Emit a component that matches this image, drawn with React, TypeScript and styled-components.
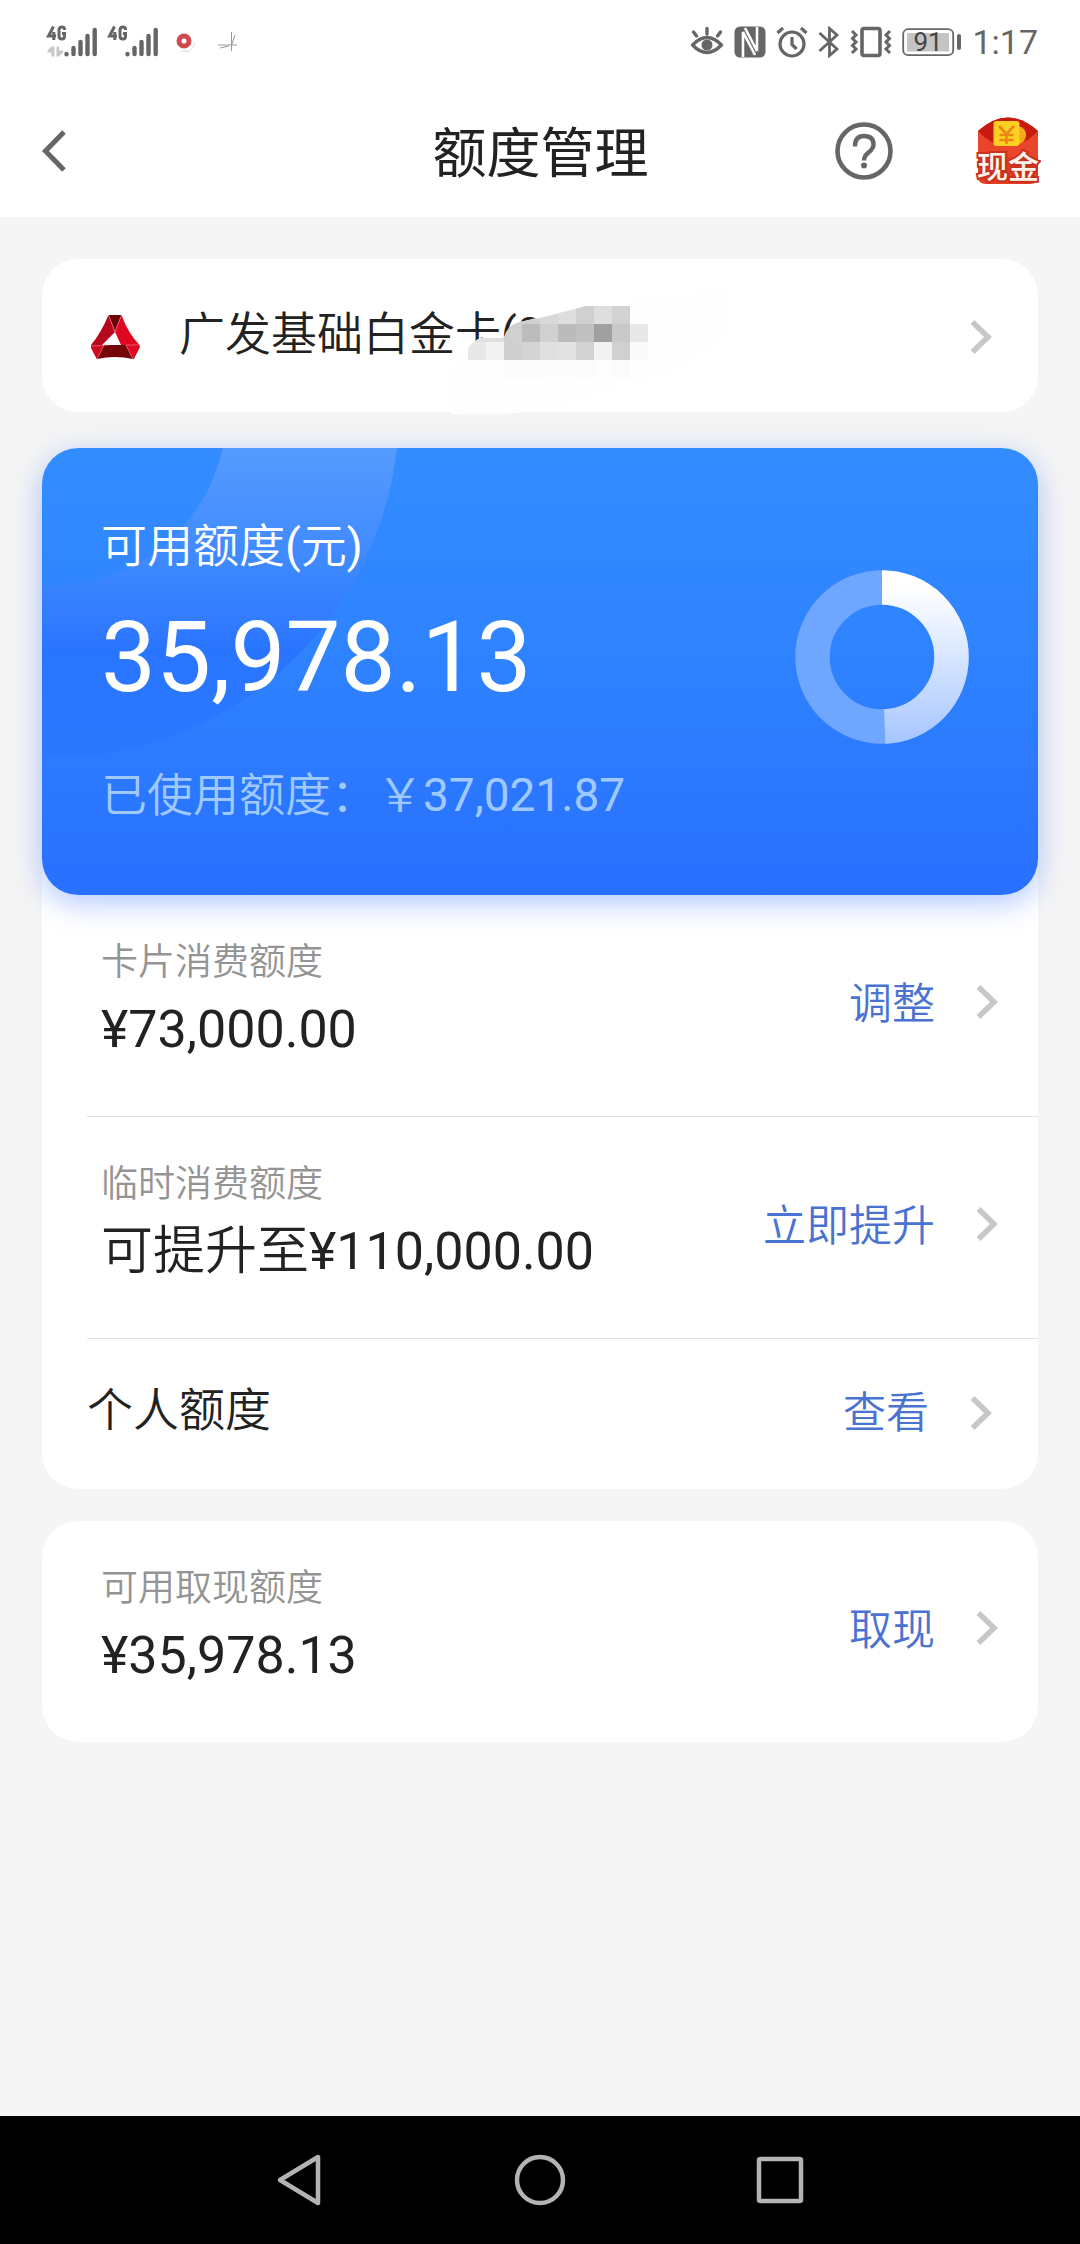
import React from 'react';
import styled, { createGlobalStyle } from 'styled-components';

const GlobalStyle = createGlobalStyle`
  * { box-sizing: border-box; }
  body {
    margin: 0;
    background: #f5f5f5;
    color: #222;
    font-family: Roboto, "Noto Sans CJK SC DemiLight", "Noto Sans CJK SC", sans-serif;
  }
  h1, h2, p, ul { margin: 0; padding: 0; font-weight: 400; }
  ul { list-style: none; }
  button {
    margin: 0;
    padding: 0;
    border: 0;
    background: none;
    color: inherit;
    font: inherit;
    cursor: pointer;
  }
  svg { display: block; flex: none; }
`;

const Page = styled.div`
  min-height: 100vh;
  display: flex;
  flex-direction: column;
`;

const StatusBar = styled.div`
  display: flex;
  justify-content: space-between;
  align-items: center;
  height: 84px;
  padding: 0 42px 0 46px;
  background: #fff;
  color: #666;
`;

const StatusGroup = styled.div<{ $gap: number; $inset?: number }>`
  display: flex;
  align-items: center;
  gap: ${(p) => p.$gap}px;
  padding-left: ${(p) => p.$inset ?? 0}px;
`;

const Clock = styled.span`
  font-size: 34px;
  line-height: 40px;
`;

const Header = styled.header`
  display: grid;
  grid-template-columns: 1fr auto 1fr;
  align-items: center;
  height: 133px;
  padding: 0 39px 0 40px;
  background: #fff;
`;

const Title = styled.h1`
  padding-top: 8px;
  font-family: Roboto, "Noto Sans CJK SC", sans-serif;
  font-size: 54px;
  line-height: 72px;
`;

const HeaderActions = styled.div<{ $end?: boolean }>`
  display: flex;
  justify-content: ${(p) => (p.$end ? 'flex-end' : 'flex-start')};
  align-items: center;
  gap: 82px;
`;

const Content = styled.main`
  flex: 1;
  padding: 42px 42px 64px;
`;

const Card = styled.section<{ $gap?: number }>`
  position: relative;
  margin-bottom: ${(p) => p.$gap ?? 0}px;
  border-radius: 36px;
  background: #fff;
`;

const CardPicker = styled.button`
  display: flex;
  align-items: center;
  width: 100%;
  padding: 45px 46px 43px 48px;
  text-align: left;
`;

const CardName = styled.span`
  flex: 1;
  padding: 0 0 5px 39px;
  font-size: 46px;
  line-height: 60px;
`;

const Redaction = styled.svg`
  position: absolute;
  left: 388px;
  top: 21px;
`;

const Balance = styled.section`
  position: relative;
  display: flex;
  justify-content: space-between;
  align-items: flex-start;
  padding: 68px 69px 70px 59px;
  border-radius: 36px;
  background: linear-gradient(180deg, #338dff 0%, #2f83ff 45%, #2870ff 100%);
  box-shadow: 0 8px 30px rgba(40, 100, 255, 0.36);
  color: #fff;
`;

const BalanceRings = styled.svg`
  position: absolute;
  left: 0;
  top: 0;
  border-top-left-radius: 36px;
`;

const BalanceText = styled.div`
  position: relative;
`;

const BalanceLabel = styled.h2`
  font-size: 46px;
  line-height: 60px;
`;

const BalanceAmount = styled.p`
  padding: 16px 0 41px;
  font-size: 98px;
  line-height: 132px;
`;

const BalanceUsed = styled.p`
  color: #a0c9ff;
  font-size: 46px;
  line-height: 60px;
`;

const BalanceChart = styled.div`
  padding-top: 54px;
`;

const Row = styled.li<{ $compact?: boolean }>`
  display: flex;
  justify-content: space-between;
  align-items: center;
  margin-left: 45px;
  padding: ${(p) => (p.$compact ? '41px 46px 43px 0' : '48px 40px 56px 14px')};

  & + & {
    border-top: 1px solid #e2e2e2;
  }
`;

const RowLabel = styled.h2`
  color: #949494;
  font-size: 37px;
  line-height: 40px;
`;

const RowAmount = styled.p`
  padding-top: 17px;
  font-size: 52px;
  line-height: 60px;
`;

const RowTitle = styled.h2`
  padding-bottom: 6px;
  font-size: 46px;
  line-height: 60px;
`;

const RowAction = styled.button`
  display: flex;
  align-items: center;
  gap: 41px;
  color: #4a73d1;
  font-size: 43px;
  line-height: 60px;
`;

const ActionText = styled.span<{ $lower?: boolean }>`
  padding-top: ${(p) => (p.$lower ? 4 : 0)}px;
`;

const NavBar = styled.nav`
  display: grid;
  grid-template-columns: repeat(3, 1fr);
  align-items: center;
  justify-items: center;
  height: 128px;
  padding: 0 calc(100% / 6);
  background: #000;
`;

const Chevron = () => (
  <svg width="22" height="36" viewBox="0 0 22 36" fill="none" stroke="#c7c7c7" strokeWidth="5.5" aria-hidden="true">
    <path d="M2.5 3 18 18 2.5 33" />
  </svg>
);

const Signal = ({ data }: { data?: boolean }) => (
  <svg width="52" height="34" viewBox="0 0 52 34" aria-hidden="true">
    <g stroke="#666" strokeWidth="3" fill="none">
      <path d="M7.5 1.5 2.5 11H10M7.8 7V15" />
      <path d="M18.5 5V4.5Q18.5 2 16 2 13 2 13 5V11Q13 14 16 14 18.5 14 18.5 11V8.5H16" />
    </g>
    {data && (
      <path
        d="M5.5 21.5H8.5V31.5H5.5V27.5H1.500V25.5ZM10.5 21.5H13V25.500H17V27.5L13 31.5H10.5Z"
        fill="#c8c8c8"
      />
    )}
    <path
      d="M20.500 29V29.200M27.500 23V29M34.500 17V29M41.500 11V29M48.700 5V29"
      stroke="#666"
      strokeWidth="4.400"
      strokeLinecap="round"
    />
  </svg>
);

const RecordDot = () => (
  <svg width="22" height="24" viewBox="0 0 22 24" fill="none" aria-hidden="true">
    <circle cx="9" cy="11" r="5" stroke="#d14a50" strokeWidth="5" />
    <path d="M10 22Q18 21 20 13M6 21Q9 22 12 20" stroke="#ddd" strokeWidth="1" />
  </svg>
);

const Scribble = () => (
  <svg width="22" height="22" viewBox="0 0 22 22" fill="none" stroke="#999" strokeWidth="1" aria-hidden="true">
    <path d="M1 14H20M14.500 1V20M18 4 15 13M3 17 12 15" />
  </svg>
);

const EyeIcon = () => (
  <svg width="34" height="32" viewBox="0 0 34 32" fill="none" stroke="#666" strokeWidth="3.400" strokeLinecap="round" aria-hidden="true">
    <path d="M2.500 19Q17 4 31.500 19 17 34 2.500 19Z" strokeLinejoin="round" />
    <circle cx="17" cy="19" r="5.500" fill="#666" stroke="none" />
    <path d="M17 2.500V8M3.500 6 6.500 10M30.500 6 27.500 10" />
  </svg>
);

const NfcIcon = () => (
  <svg width="32" height="32" viewBox="0 0 32 32" aria-hidden="true">
    <rect x=".5" y=".5" width="31" height="31" rx="5.500" fill="#666" />
    <path d="M9 31V6L21 29M23 1V25L11 2" fill="none" stroke="#fff" strokeWidth="2.600" />
  </svg>
);

const AlarmIcon = () => (
  <svg width="32" height="32" viewBox="0 0 32 32" fill="none" stroke="#666" strokeWidth="3.200" aria-hidden="true">
    <circle cx="16" cy="18" r="12" />
    <path d="M16 11V18.500L20.500 23M1.500 7 7 2M30.500 7 25 2" />
  </svg>
);

const BluetoothIcon = () => (
  <svg width="22" height="32" viewBox="0 0 22 32" fill="none" stroke="#666" strokeWidth="2.800" aria-hidden="true">
    <path d="M1.500 7 19 23 11.500 29.500V2.500L19 9 1.500 25" />
  </svg>
);

const VibrateIcon = () => (
  <svg width="42" height="32" viewBox="0 0 42 32" fill="none" stroke="#666" aria-hidden="true">
    <rect x="12" y="2.500" width="18" height="27" rx="2" strokeWidth="3.600" />
    <path
      d="M2 5 6 9 2.500 12.500 6 16 2.500 19.500 6 23 2 27M40 5 36 9 39.500 12.500 36 16 39.500 19.500 36 23 40 27"
      strokeWidth="3"
    />
  </svg>
);

const BatteryIcon = () => (
  <svg width="60" height="32" viewBox="0 0 60 32" role="img" aria-label="91%">
    <rect x="1.200" y="3.200" width="50" height="26" rx="5" fill="none" stroke="#666" strokeWidth="1.800" />
    <rect x="5" y="7" width="42" height="18.500" fill="#c4c4c4" />
    <rect x="55" y="8" width="4" height="16" rx="2" fill="#666" />
    <text x="26" y="25" textAnchor="middle" fontSize="26" fontFamily="Roboto, sans-serif" fill="#444">
      91
    </text>
  </svg>
);

const BackIcon = () => (
  <svg width="28" height="44" viewBox="0 0 28 44" fill="none" stroke="#666" strokeWidth="5" aria-hidden="true">
    <path d="M24 3 5.500 22 24 41" />
  </svg>
);

const HelpIcon = () => (
  <svg width="58" height="58" viewBox="0 0 58 58" fill="none" stroke="#666" aria-hidden="true">
    <circle cx="29" cy="29" r="26.500" strokeWidth="4.600" />
    <path d="M20 24.500Q20 14 29 14 38.500 14 38.500 22.500 38.500 26.500 33.500 30.500 29 34 29 38.500" strokeWidth="4.400" />
    <circle cx="29" cy="43.500" r="3" fill="#666" stroke="none" />
  </svg>
);

const CashIcon = () => (
  <svg width="66" height="76" viewBox="0 -4 66 76" aria-hidden="true">
    <path d="M3 14Q33-13 63 14V59Q63 67 55 67H11Q3 67 3 59Z" fill="#e63c22" />
    <path d="M3 14Q33-13 63 14Q57 27 46 30H20Q9 27 3 14Z" fill="#c91a10" />
    <path d="M43 9Q54 12 50 22 47 29 38 29Z" fill="#f5a81c" />
    <path d="M3 14Q17 29 33 29T63 14V40H3Z" fill="#e8452a" />
    <rect x="18.500" y="4" width="26" height="25" rx="3" fill="#fdd023" />
    <path d="M24 9 31.500 17 39 9M31.500 17V27M24.500 18H38.500M24.500 23H38.500" fill="none" stroke="#ee8616" strokeWidth="2.600" />
    <text
      x="33"
      y="61"
      textAnchor="middle"
      fontSize="31"
      fontWeight="500"
      fontFamily='"Noto Sans CJK SC", sans-serif'
      fill="#fff4ec"
      stroke="#c8321e"
      strokeWidth="4"
      paintOrder="stroke"
    >
      现金
    </text>
  </svg>
);

const BankLogo = () => (
  <svg width="50" height="46" viewBox="0 0 50 46" aria-hidden="true">
    <path d="M18.500 1H31.500L25 18Z" fill="#6e0408" />
    <path d="M18.500 1 25 18 12 31H1Q11 19 18.500 1Z" fill="#b8081c" />
    <path d="M31.500 1 25 18 38 31 42 45Q45 41 49.500 33V31Q38 19 31.500 1Z" fill="#df0722" />
    <path d="M1 31H14L7 45.500 1 34Z" fill="#cf0a22" />
    <path d="M14 31H36L43 45Q25 41 7 45Z" fill="#740509" />
    <path d="M36 31H49.500V34L43.500 45.500Z" fill="#c00a20" />
    <path d="M25 18 31 31H36L43 45 49 32 36 25Z" fill="#df0722" />
    <path d="M25 20 30.500 31H19.500Z" fill="#fff" />
    <path
      d="M18.500 1 25 18M31.500 1 25 18M1 32 19 31M36 31 43 45M14 31 7 45M36 31H49"
      fill="none"
      stroke="#f08a90"
      strokeWidth=".6"
    />
  </svg>
);

const mosaicRows = [
  { y: 306, x: 504, tones: ['#d0d0d0', '#d0d0d0', '#d8d8d8', '#dedede', '#d0d0d0', '#dedede', '#d2d2d2'] },
  {
    y: 324,
    x: 468,
    tones: ['#e0e0e0', '#e0e0e0', '#d0d0d0', '#bcbcbc', '#d0d0d0', '#bbbbbb', '#c0c0c0', '#a0a0a0', '#c9c9c9', '#e8e8e8'],
  },
  {
    y: 342,
    x: 468,
    tones: ['#e8e8e8', '#f2f2f2', '#cfcfcf', '#d4d4d4', '#e0e0e0', '#e2e2e2', '#d2d2d2', '#f2f2f2', '#d0d0d0', '#fafafa'],
  },
  { y: 360, x: 504, tones: ['#fbfbfb', '#fbfbfb', '#fcfcfc', '#fcfcfc', '#fbfbfb', '#fdfdfd', '#fbfbfb'] },
];

const CardNumberMosaic = () => (
  <Redaction width="300" height="136" viewBox="430 280 300 136" aria-hidden="true">
    <defs>
      <clipPath id="smear">
        <path d="M468 378V350Q468 345 480 338H504Q508 324 520 322L540 318 586 306H648V378Z" />
      </clipPath>
    </defs>
    <path d="M452 414V372Q458 350 480 338H504Q508 324 520 322L586 306 700 292 728 290V330Q690 372 620 386 560 408 520 413Z" fill="#fefefe" />
    <g clipPath="url(#smear)">
      {mosaicRows.map((row) =>
        row.tones.map((tone, i) => (
          <rect key={`${row.y}-${i}`} x={row.x + i * 18} y={row.y} width="18" height="18" fill={tone} />
        )),
      )}
    </g>
  </Redaction>
);

const Rings = () => (
  <BalanceRings width="360" height="312" viewBox="42 448 360 312" fill="none" aria-hidden="true">
    <defs>
      <linearGradient id="ring" gradientUnits="userSpaceOnUse" x1="0" y1="448" x2="0" y2="758">
        <stop offset="0" stopColor="#559bff" />
        <stop offset=".35" stopColor="#408aff" />
        <stop offset=".65" stopColor="#2a75ff" />
        <stop offset="1" stopColor="#2b78ff" />
      </linearGradient>
    </defs>
    <circle cx="51" cy="410" r="262" stroke="url(#ring)" strokeWidth="172" />
  </BalanceRings>
);

const USED_SHARE = 35978.13 / 73000;

const Donut = () => {
  const circumference = 2 * Math.PI * 69.5;
  return (
    <svg width="174" height="174" viewBox="0 0 174 174" fill="none" role="img" aria-label="可用额度">
      <defs>
        <linearGradient id="share" gradientUnits="userSpaceOnUse" x1="0" y1="0" x2="174" y2="0">
          <stop offset="0" stopColor="#a6c6ff" />
          <stop offset=".9" stopColor="#fff" />
        </linearGradient>
      </defs>
      <circle cx="87" cy="87" r="69.5" stroke="#6fa6ff" strokeWidth="34.500" />
      <circle
        cx="87"
        cy="87"
        r="69.5"
        stroke="url(#share)"
        strokeWidth="34.500"
        strokeDasharray={`${circumference * USED_SHARE} ${circumference}`}
        transform="rotate(-90 87 87)"
      />
    </svg>
  );
};

const NavIcon = ({ children }: { children: React.ReactNode }) => (
  <svg width="56" height="56" viewBox="0 0 56 56" fill="none" stroke="#b3b3b3" strokeWidth="4.500" strokeLinejoin="round" aria-hidden="true">
    {children}
  </svg>
);

interface LimitProps {
  label: string;
  amount: string;
  action: string;
}

const LimitRow = ({ label, amount, action }: LimitProps) => (
  <Row>
    <div>
      <RowLabel>{label}</RowLabel>
      <RowAmount>{amount}</RowAmount>
    </div>
    <RowAction type="button">
      <ActionText $lower>{action}</ActionText>
      <Chevron />
    </RowAction>
  </Row>
);

export default function App() {
  return (
    <Page>
      <GlobalStyle />
      <StatusBar>
        <StatusGroup $gap={9}>
          <Signal data />
          <Signal />
          <StatusGroup $gap={20} $inset={7}>
            <RecordDot />
            <Scribble />
          </StatusGroup>
        </StatusGroup>
        <StatusGroup $gap={10}>
          <EyeIcon />
          <NfcIcon />
          <AlarmIcon />
          <BluetoothIcon />
          <VibrateIcon />
          <BatteryIcon />
          <Clock>1:17</Clock>
        </StatusGroup>
      </StatusBar>

      <Header>
        <HeaderActions>
          <button type="button" aria-label="返回">
            <BackIcon />
          </button>
        </HeaderActions>
        <Title>额度管理</Title>
        <HeaderActions $end>
          <button type="button" aria-label="帮助">
            <HelpIcon />
          </button>
          <button type="button" aria-label="现金">
            <CashIcon />
          </button>
        </HeaderActions>
      </Header>

      <Content>
        <Card $gap={36}>
          <CardPicker type="button">
            <BankLogo />
            <CardName>广发基础白金卡(8</CardName>
            <Chevron />
          </CardPicker>
          <CardNumberMosaic />
        </Card>

        <Card $gap={32}>
          <Balance>
            <Rings />
            <BalanceText>
              <BalanceLabel>可用额度(元)</BalanceLabel>
              <BalanceAmount>35,978.13</BalanceAmount>
              <BalanceUsed>已使用额度：￥37,021.87</BalanceUsed>
            </BalanceText>
            <BalanceChart>
              <Donut />
            </BalanceChart>
          </Balance>
          <ul>
            <LimitRow label="卡片消费额度" amount="¥73,000.00" action="调整" />
            <LimitRow label="临时消费额度" amount="可提升至¥110,000.00" action="立即提升" />
            <Row $compact>
              <RowTitle>个人额度</RowTitle>
              <RowAction type="button">
                <ActionText>查看</ActionText>
                <Chevron />
              </RowAction>
            </Row>
          </ul>
        </Card>

        <Card>
          <ul>
            <LimitRow label="可用取现额度" amount="¥35,978.13" action="取现" />
          </ul>
        </Card>
      </Content>

      <NavBar>
        <button type="button" aria-label="后退">
          <NavIcon>
            <path d="M8 28 46 5V51Z" />
          </NavIcon>
        </button>
        <button type="button" aria-label="主页">
          <NavIcon>
            <circle cx="28" cy="28" r="23" />
          </NavIcon>
        </button>
        <button type="button" aria-label="最近任务">
          <NavIcon>
            <rect x="7" y="7" width="42" height="42" rx="1.500" />
          </NavIcon>
        </button>
      </NavBar>
    </Page>
  );
}
